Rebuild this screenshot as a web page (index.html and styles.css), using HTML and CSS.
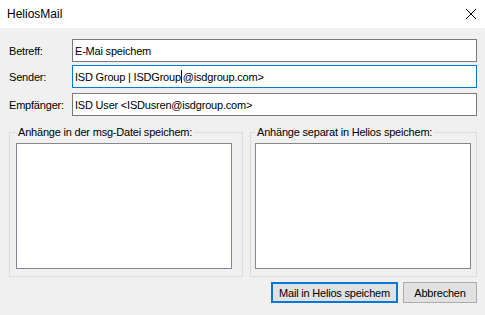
FILE: index.html
```html
<!DOCTYPE html>
<html><head><meta charset="UTF-8" /><link rel="stylesheet" href="styles.css"></head>
<body>
<div class="titlebar">
	<span class="title">HeliosMail</span>
	<svg class="close" width="10" height="10" viewBox="0 0 10 10">
		<line x1="0" y1="0" x2="10" y2="10" stroke="black" stroke-width="1" />
		<line x1="10" y1="0" x2="0" y2="10" stroke="black" stroke-width="1" />
	</svg>
</div>
<div class="form">
	<div class="row">
		<span class="label">Betreff:</span>
		<div class="field">E-Mai speichem</div>
	</div>
	<div class="row row2">
		<span class="label">Sender:</span>
		<div class="field focus">ISD Group | ISDGroup<span class="caret"></span>@isdgroup.com&gt;</div>
	</div>
	<div class="row row3">
		<span class="label">Empfänger:</span>
		<div class="field">ISD User &lt;ISDusren@isdgroup.com&gt;</div>
	</div>
	<div class="groups">
		<fieldset class="group left">
			<legend>Anhänge in der msg-Datei speichem:</legend>
			<div class="listbox"></div>
		</fieldset>
		<fieldset class="group right">
			<legend>Anhänge separat in Helios speichem:</legend>
			<div class="listbox"></div>
		</fieldset>
	</div>
	<div class="buttons">
		<button class="btn primary">Mail in Helios speichem</button>
		<button class="btn cancel">Abbrechen</button>
	</div>
</div>
</body></html>
```
FILE: styles.css
```css
body { margin: 0; width: 485px; height: 315px; background: #f0f0f0;
	font-family: "Liberation Sans", Arial, sans-serif; font-size: 11px; color: #000;
	overflow: hidden;
}
.titlebar { height: 28px; background: #fff; display: flex; align-items: center;
	justify-content: space-between; padding: 0 9px 0 7px; }
.title { font-size: 12px; }
.form { padding-top: 11px; letter-spacing: -0.2px; }
.row { display: flex; align-items: center; height: 23px; }
.row2 { margin-top: 3px; }
.row3 { margin-top: 5px; }
.label { width: 72px; box-sizing: border-box; padding-left: 9px; }
.field { flex: 1; margin-right: 8px; height: 23px; box-sizing: border-box;
	border: 1px solid #7a7a7a; background: #fff; padding-left: 2px;
	display: flex; align-items: center; white-space: nowrap; }
.field.focus { border-color: #0078d7; }
.caret { display: inline-block; width: 1px; height: 13px; background: #000; margin: 0 1px 0 0; }
.groups { display: flex; gap: 7px; padding-left: 9px; margin-top: 10px; }
.group { margin: 0; border: 1px solid #dcdcdc; padding: 4px 10px 7px 6px; }
.group.right { padding: 4px 5px 7px 4px; }
.group legend { padding: 0 2px; line-height: 13px; }
.listbox { width: 216px; height: 126px; box-sizing: border-box; background: #fff;
	border: 1px solid #828790; }
.buttons { display: flex; justify-content: flex-end; gap: 5px; padding-right: 8px; margin-top: 5px; }
.btn { height: 21px; box-sizing: border-box; background: #e1e1e1; font: inherit;
	letter-spacing: inherit; color: #000; padding: 0; border-radius: 0; }
.primary { width: 127px; border: 2px solid #0078d7; }
.cancel { width: 74px; border: 1px solid #adadad; }
```
